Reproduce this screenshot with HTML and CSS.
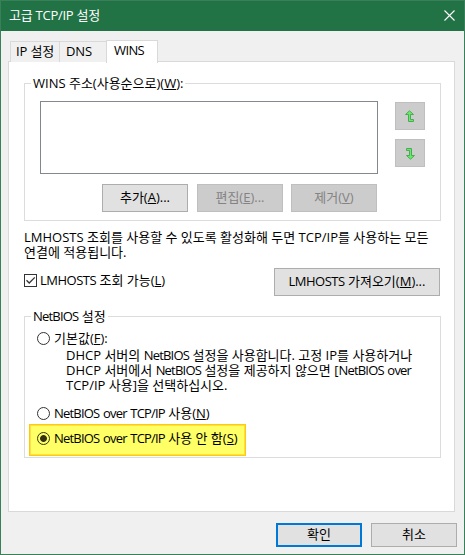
FILE: index.html
```html
<!DOCTYPE html>
<html lang="ko">
<head>
<meta charset="utf-8">
<title>고급 TCP/IP 설정</title>
<link rel="stylesheet" href="styles.css">
</head>
<body>
<div class="dialog">
  <header class="titlebar">
    <span class="title">고급 TCP/IP 설정</span>
    <svg class="close" width="11" height="11" viewBox="0 0 11 11"><path d="M.5 .5 10.5 10.5M10.5 .5 .5 10.5"/></svg>
  </header>
  <nav class="tabs">
    <span class="tab tab-ip">IP 설정</span>
    <span class="tab tab-dns">DNS</span>
    <span class="tab tab-wins active">WINS</span>
  </nav>
  <main class="panel">
    <fieldset class="group wins">
      <legend>WINS 주소(사용순으로)(<u>W</u>):</legend>
      <div class="list-row">
        <div class="listbox"></div>
        <div class="order">
          <button class="btn arrow" disabled><svg width="10" height="13" viewBox="0 0 10 13"><path d="M4.5 .8 8.5 4.5H5.5V9.5H8.5V11.5H3.5V4.5H.5Z"/></svg></button>
          <button class="btn arrow" disabled><svg class="down" width="10" height="13" viewBox="0 0 10 13"><path d="M4.5 .8 8.5 4.5H5.5V9.5H8.5V11.5H3.5V4.5H.5Z"/></svg></button>
        </div>
      </div>
      <div class="list-actions">
        <button class="btn">추가(<u>A</u>)...</button>
        <button class="btn" disabled>편집(<u>E</u>)...</button>
        <button class="btn" disabled>제거(<u>V</u>)</button>
      </div>
    </fieldset>
    <p class="info">LMHOSTS 조회를 사용할 수 있도록 활성화해 두면 TCP/IP를 사용하는 모든<br>연결에 적용됩니다.</p>
    <div class="lmhosts">
      <label class="check"><svg width="13" height="13" viewBox="0 0 13 13"><rect x=".5" y=".5" width="12" height="12"/><path d="M2.5 6.3 5.2 9 10.8 3.4"/></svg><span><span class="caps">LMHOSTS</span> 조회 가능(<u>L</u>)</span></label>
      <button class="btn import"><span class="caps">LMHOSTS</span> 가져오기(<u>M</u>)...</button>
    </div>
    <fieldset class="group netbios">
      <legend><span class="narrow">NetBIOS</span> 설정</legend>
      <label class="radio"><i class="dot"></i><span>기본값(<u>F</u>):</span></label>
      <p class="desc">DHCP 서버의 <span class="narrow">NetBIOS</span> 설정을 사용합니다. 고정 IP를 사용하거나<br>DHCP 서버에서 <span class="narrow">NetBIOS</span> 설정을 제공하지 않으면 [<span class="narrow">NetBIOS over</span><br>TCP/IP 사용]을 선택하십시오.</p>
      <label class="radio"><i class="dot"></i><span><span class="narrow">NetBIOS over TCP/IP</span> 사용(<u>N</u>)</span></label>
      <label class="radio highlight"><i class="dot on"></i><span><span class="narrow">NetBIOS over TCP/IP</span> 사용 안 함(<u>S</u>)</span></label>
    </fieldset>
  </main>
  <footer class="footer">
    <button class="btn primary">확인</button>
    <button class="btn">취소</button>
  </footer>
</div>
</body>
</html>
```
FILE: styles.css
```css
* { box-sizing: border-box; }
body {
  margin: 0;
  font: 13px/15px "Open Sans", "Noto Sans CJK KR", sans-serif;
  color: #000;
}
p { margin: 0; white-space: nowrap; }
u { text-decoration-thickness: 1px; text-underline-offset: 1px; text-decoration-skip-ink: none; }
.dialog {
  width: 465px;
  height: 555px;
  border: 1px solid #39805a;
  background: #f0f0f0;
  display: flex;
  flex-direction: column;
}
.titlebar {
  height: 30px;
  flex: none;
  background: #217346;
  color: #fff;
  display: flex;
  align-items: center;
  justify-content: space-between;
  padding: 0 9px 2px 8px;
}
.title { letter-spacing: -.25px; }
.close { fill: none; stroke: #fff; stroke-width: 1.1; }
.tabs {
  height: 31px;
  flex: none;
  display: flex;
  align-items: flex-end;
  padding-left: 9px;
  position: relative;
}
.tab {
  height: 21px;
  border: 1px solid #d9d9d9;
  border-bottom: 0;
  padding-top: 2px;
  background: #f0f0f0;
}
.tab-ip { width: 50px; padding-left: 5px; letter-spacing: -.15px; }
.tab-dns { width: 46px; padding-left: 6px; border-left: 0; border-right: 0; letter-spacing: -.1px; }
.tab-wins { width: 52px; padding-left: 7px; letter-spacing: -.6px; }
.tab.active { height: 23px; background: #fff; margin-bottom: -1px; }
.panel {
  width: 447px;
  height: 451px;
  flex: none;
  margin-left: 7px;
  margin-top: -1px;
  border: 1px solid #d9d9d9;
  background: #fff;
  padding: 14px 13px 0 15px;
}
.group {
  margin: 0;
  border: 1px solid #dcdcdc;
  min-width: 0;
  width: 417px;
}
.group legend { padding: 0 2px; height: 15px; }
.wins legend { margin-left: -9px; }
.netbios legend { margin-left: -6px; }
.wins { height: 145px; padding: 10px 15px 0; }
.list-row { display: flex; gap: 17px; }
.listbox { width: 338px; height: 73px; border: 1px solid #828790; }
.order { display: flex; flex-direction: column; gap: 9px; padding-top: 1px; }
.btn {
  font: inherit;
  color: #000;
  width: 86px;
  height: 28px;
  border: 1px solid #adadad;
  border-radius: 0;
  background: #e1e1e1;
  padding: 0 0 1px;
  white-space: nowrap;
}
.btn:disabled { background: #ccc; border-color: #bfbfbf; color: #838383; }
.btn.arrow { width: 30px; padding: 0; display: flex; align-items: center; justify-content: center; }
.arrow svg { fill: #62ed62; stroke: #4fa85a; stroke-width: 1; }
.arrow .down { transform: rotate(180deg); }
.list-actions { display: flex; gap: 9px; padding: 10px 0 0 62px; }
.list-actions .btn:last-child { margin-left: -1px; }
.info { margin-top: 9px; }
.lmhosts { display: flex; justify-content: space-between; align-items: flex-start; margin-top: 8px; padding-right: 1px; }
.check { display: flex; gap: 3px; padding-top: 6px; }
.check svg { fill: #fff; stroke: #333; }
.check path { fill: none; stroke-width: 1.3; }
.check > span { margin-top: -1px; }
.caps { letter-spacing: -.5px; }
.narrow { letter-spacing: -.8px; word-spacing: 1px; }
.btn.import { width: 166px; }
.netbios { height: 149px; margin-top: 13px; padding: 7px 0 0 12px; }
.radio { display: flex; align-items: center; gap: 4px; height: 15px; white-space: nowrap; }
.dot {
  width: 13px;
  height: 13px;
  flex: none;
  border: 1px solid #333;
  border-radius: 50%;
  background: #fff;
}
.dot.on { background: radial-gradient(circle, #333314 3px, #ffff66 3.8px); border-color: #333314; }
.desc { margin: 2px 0 13px 29px; }
.highlight {
  width: 217px;
  height: 32px;
  margin: 3px 0 0 -8px;
  padding: 0 0 3px 7px;
  border: 1px solid #ffc90e;
  box-shadow: inset 0 0 0 1px #ffe040;
  background: #ffff66;
}
.footer { display: flex; justify-content: flex-end; gap: 9px; padding: 11px 7px 0 0; }
.footer .btn { height: 24px; }
.footer .primary { border: 2px solid #0078d7; }
```
